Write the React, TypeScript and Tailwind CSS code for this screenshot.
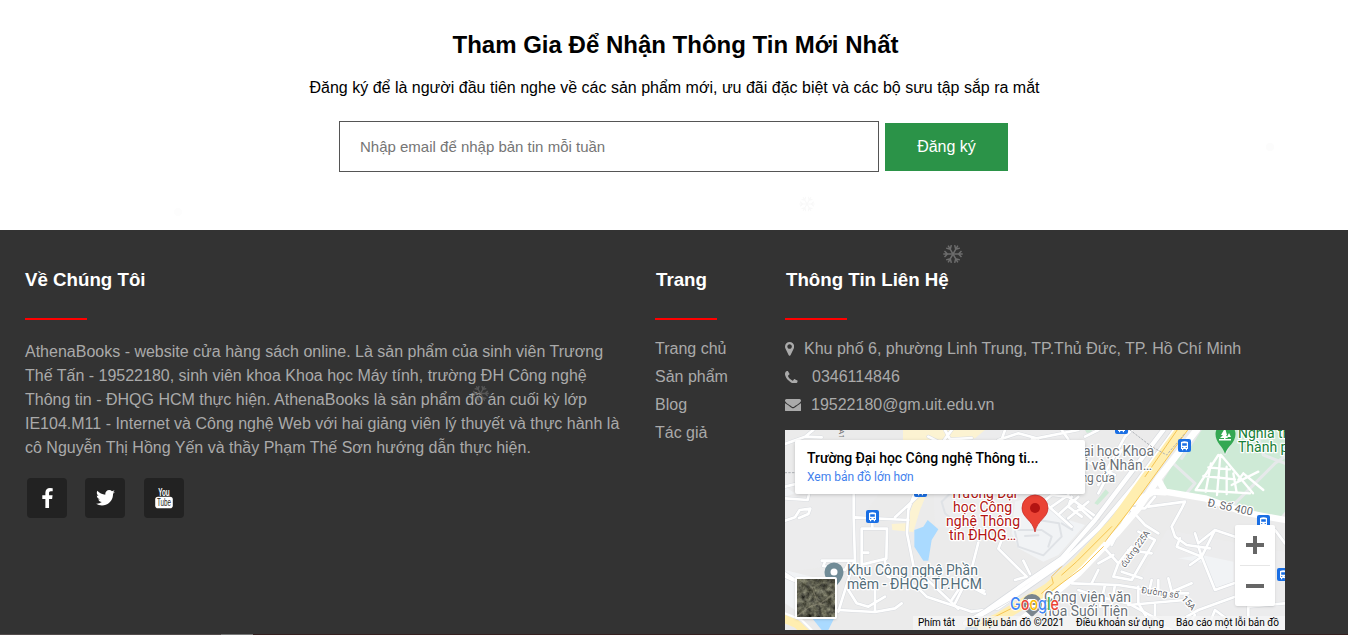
import React from 'react';

const blocks = [
  'M0 120H396L348 102 252 234 206 400 0 426Z',
  'M438 0H900L852 60 630 330 450 288Z',
  'M1146 300L1500 366V600H1170L1050 470Z',
];

const campus = [
  'M496 190L470 215 480 250 520 285 650 315',
  'M690 305L700 350 775 376 810 340 830 320 822 280 760 270M700 300L770 300 800 320 790 350M830 280L862 300 845 265M720 318L760 316',
];

const streets = [
  'M0 42L60 20 110 22M60 20L85 0M0 170L40 160M0 205L68 210 72 192M0 272L30 262 44 240 76 236 70 252 42 264',
  'M206 190V262L210 400M210 262L370 270M262 262V292M230 296H306L304 386 230 404V296M232 368H250M330 262L408 190M388 192L370 240 366 310 388 420 430 452 520 536',
  'M110 392L205 392M120 395L115 408 180 420 190 400M205 400L160 545M300 392L308 440 345 452 395 470 425 500 520 532 560 545 640 535 720 480 800 420 830 395',
  'M270 480V546M190 480L215 520 250 530 300 500M160 540L270 546 330 535 350 520M0 430L60 470M0 440L28 452',
  'M580 338L562 408 540 460 600 492M540 460L510 520M650 330L640 356 725 440 690 450M715 392L735 432M560 472L598 482M520 480L500 510',
  'M430 20L470 40 500 0M480 0L495 28 560 24M660 0L650 28M740 28L880 0M640 30L700 10 760 26M830 0L850 28M900 20L940 0',
  'M775 215L800 195 850 200 940 265M800 230L850 195M825 250L880 200M850 265L910 215M775 215L860 290M880 230L930 275M860 200L850 230 890 260',
  'M940 165L1020 20 1040 0M905 95L990 135M1010 60L940 190',
  'M1110 200L1080 235 1035 235 1080 285 1120 310M1030 245L980 345M1090 230L1200 215 1190 235 1160 290 1170 320 1205 345 1275 355M1085 190L1110 170',
  'M950 345L1000 400 985 440 1040 450 1110 330 1060 305M985 375L940 400M1010 425L1070 445M1030 360L1100 370M1000 400L1040 350',
  'M1185 325L1175 350 1250 380 1290 300M1250 380L1290 480 1360 455M1215 405L1250 380 1240 350M1230 310L1240 340 1290 300 1350 320',
  'M860 460L1000 465 1160 490 1210 490M880 480L940 500 1030 520 1140 580M920 460L940 420M960 465L945 530M990 465L980 520M1100 450L1090 495M1120 450V490M1150 445L1160 485 1220 460M1060 470V520',
  'M1030 525L1200 510M1060 520L1090 570 1160 600M1110 525V600M1170 580L1240 540 1350 500M1200 600L1230 555M1270 590L1290 540 1330 570M1390 600V530L1500 520M1470 300L1500 340',
];

const parkPaths = [
  'M1300 75L1232 180M1306 75L1296 195M1308 75L1404 190M1270 112L1335 118M1255 138L1350 148M1278 100L1262 185M1325 110V192M1345 130L1355 188M1232 180L1395 190',
  'M1340 165L1420 125M1375 130L1435 180M1375 130L1360 150',
];

function Bus({ x, y }: { x: number; y: number }) {
  return (
    <g transform={`translate(${x} ${y})`}>
      <rect width="13" height="13" rx="2" fill="#1a6fe4" />
      <path d="M3 3Q6.5 1.5 10 3V10H9V11.2H7.8V10H5.2V11.2H4V10H3Z" fill="#fff" />
      <path d="M4.2 4.2H8.8V6.8H4.2ZM4.2 8H5.3V9H4.2ZM7.7 8H8.8V9H7.7Z" fill="#1a6fe4" />
    </g>
  );
}

function MapDrawing() {
  return (
    <svg width="500" height="200" viewBox="0 0 500 200" className="block" fontFamily="Roboto, sans-serif">
      <rect width="500" height="200" fill="#ebebeb" />
      <g transform="scale(.33333)" strokeLinejoin="round" strokeLinecap="round">
        {blocks.map((d) => (
          <path key={d} d={d} fill="#ececed" />
        ))}
        <path d="M690 215L760 195 850 270 900 285 820 375 775 395 700 355 680 310ZM1180 385L1250 375 1345 395V455L1290 475 1260 400ZM0 420L80 440 120 540 60 560 0 520ZM0 170L30 190 0 200Z" fill="#f1f3f5" />
        <path d="M1230 0H1500V245L1480 268 1350 222 1140 192 1135 150Z" fill="#ceead6" />
        <path d="M928 220L962 178 972 188 938 225ZM900 0H920V8H905Z" fill="#ceead6" />
        <path d="M428 270L460 298 440 330 430 392 415 392 388 350V300L415 290ZM78 560L160 540 130 600H110Z" fill="#aadaff" />
        <path d="M354 0H600L570 25 440 30 425 192 405 240 385 306 322 300 320 282 362 280 395 192 400 30 354 30Z" fill="#fcf3d2" />
        <g fill="none" stroke="#dfe2e6" strokeWidth="6">
          {campus.map((d) => (
            <path key={d} d={d} />
          ))}
        </g>
        <g fill="none" stroke="#d9dce0" strokeWidth="11">
          {streets.map((d) => (
            <path key={d} d={d} />
          ))}
        </g>
        <g fill="none" stroke="#fff" strokeWidth="8">
          {streets.map((d) => (
            <path key={d} d={d} />
          ))}
        </g>
        <path d="M1190 55L1165 100 1230 160 1200 195M1245 0L1190 85M1420 20L1435 75 1500 100M1380 190L1470 100 1500 80M1320 70L1345 20M1340 230L1400 170" fill="none" stroke="#e6e9ea" strokeWidth="9" />
        <g fill="none" stroke="#fff" strokeWidth="7">
          {parkPaths.map((d) => (
            <path key={d} d={d} />
          ))}
        </g>
        <path d="M1135 0L1040 125 930 270 830 385 720 460 600 545 540 580M1170 0L1050 165 940 295 830 400 700 490 560 570" fill="none" stroke="#d8dbdf" strokeWidth="17" />
        <path d="M1135 0L1040 125 930 270 830 385 720 460 600 545 540 580M1170 0L1050 165 940 295 830 400 700 490 560 570" fill="none" stroke="#fff" strokeWidth="13" />
        <path d="M1235 0L1120 145 1060 235 1000 305 880 430 760 530 670 600" fill="none" stroke="#fff" strokeWidth="20" />
        <path d="M1120 150L1140 185 1260 205 1380 248 1500 270M1050 215L1105 185 1140 187" fill="none" stroke="#fff" strokeWidth="19" />
        <path d="M1195 -10L1130 80 990 275 880 395 790 475 640 565 530 615" fill="none" stroke="#ffeeb0" strokeWidth="32" />
        <path d="M1180 -5L1080 140M1208 0L1030 245 960 335M980 290L875 395 830 435M955 350L890 415 790 490M830 410L800 440 805 460 770 490M720 515L570 590" fill="none" stroke="#f5c451" strokeWidth="3" />
        <path d="M-5 565L35 582 65 610" fill="none" stroke="#ffeeb0" strokeWidth="24" />
        <path d="M-5 548L50 570 80 600" fill="none" stroke="#fff" strokeWidth="6" />
        <path d="M1035 0L1100 50 1145 75 1200 10M0 128H30" fill="none" stroke="#adb1b6" strokeWidth="3" strokeDasharray="5 6" />
      </g>

      <Bus x={81} y={80} />
      <Bus x={129} y={54} />
      <Bus x={330} y={-9} />
      <Bus x={393} y={9} />
      <Bus x={472} y={85} />
      <Bus x={492} y={138} />
      <g opacity=".6"><Bus x={180} y={197} /></g>

      <path d="M440 24C438 16 430.5 13 430.5 4A10 10 0 1 1 450.5 4C450.5 13 442.5 16 440 24Z" fill="#34a853" />
      <path d="M440 -2L436 5H438L435 8H439V9H434V10.500H446V9H440.500V8H443L441 5H442ZM444 3L442 7H446Z" fill="#fff" />
      <path d="M49 161C47 154 39.500 150 39.500 142A9.500 9.500 0 1 1 58.500 142C58.500 150 51 154 49 161Z" fill="#718c97" />
      <circle cx="49" cy="142" r="3.500" fill="#fff" />
      <path d="M247 188C245 183 237 181 237 174A10 10 0 1 1 257 174C257 181 249 183 247 188Z" fill="#7b858d" />
      <path d="M243 169H250V173H243ZM241 175H252V177H241Z" fill="#fff" />

      <g stroke="#fff" strokeWidth="2.5" strokeLinejoin="round" style={{ paintOrder: 'stroke' }}>
        <g fill="#b31412" fontSize="14">
          <text x="165" y="68" textLength="67">Trường Đại</text>
          <text x="168" y="82" textLength="59">học Công</text>
          <text x="161" y="96" textLength="74">nghệ Thông</text>
          <text x="164" y="110" textLength="67">tin ĐHQG…</text>
        </g>
        <g fill="#546e7a" fontSize="14">
          <text x="62" y="145" textLength="131">Khu Công nghệ Phần</text>
          <text x="62" y="159" textLength="135">mềm - ĐHQG TP.HCM</text>
        </g>
        <g fill="#6c7278" fontSize="14">
          <text x="298" y="26" textLength="71">ại học Khoa</text>
          <text x="300" y="40" textLength="67">i và Nhân…</text>
          <text x="296" y="52" fontSize="12" textLength="34">ng cửa</text>
          <text x="259" y="172" textLength="87">Công viên văn</text>
          <text x="259" y="186" textLength="84">hóa Suối Tiên</text>
        </g>
        <g fill="#188038" fontSize="14">
          <text x="453" y="8">Nghĩa tr</text>
          <text x="453" y="22">Thành p</text>
        </g>
        <g fill="#5f6368" fontSize="11">
          <text transform="translate(422 76) rotate(12)" textLength="46">Đ. Số 400</text>
          <text transform="translate(340 138) rotate(-54)" fontSize="9" textLength="43">đường 225A</text>
          <text transform="translate(356 163) rotate(8)" fontSize="9" textLength="38">Đường số</text>
          <text transform="translate(396 169) rotate(48)" fontSize="9">15A</text>
        </g>
      </g>
      <text transform="translate(54 -1) rotate(90)" fontSize="8" fill="#777">A1</text>

      <path d="M250 102C248 90 237 88 237 78A13 13 0 0 1 263 78C263 88 252 90 250 102Z" fill="#ea4335" stroke="#c5221f" strokeWidth=".7" />
      <circle cx="250" cy="78" r="5" fill="#b31412" />
      <g fontFamily="Inter, sans-serif" fontSize="17" fontWeight="500" stroke="#fff" strokeWidth="1.500" style={{ paintOrder: 'stroke' }}>
        <text x="225" y="180" textLength="49" lengthAdjust="spacingAndGlyphs">
          <tspan fill="#4285f4">G</tspan>
          <tspan fill="#ea4335">o</tspan>
          <tspan fill="#fbbc04">o</tspan>
          <tspan fill="#4285f4">g</tspan>
          <tspan fill="#34a853">l</tspan>
          <tspan fill="#ea4335">e</tspan>
        </text>
      </g>
      <rect x="128" y="186" width="372" height="14" fill="#f5f5f5" fillOpacity=".75" />
      <g fill="#000" fontSize="10">
        <text x="133" y="196" textLength="37">Phím tắt</text>
        <text x="182" y="196" textLength="97">Dữ liệu bản đồ ©2021</text>
        <text x="291" y="196" textLength="88">Điều khoản sử dụng</text>
        <text x="391" y="196" textLength="103">Báo cáo một lỗi bản đồ</text>
      </g>
    </svg>
  );
}

function SatelliteThumb() {
  return (
    <svg width="38" height="38" viewBox="0 0 38 38" className="block">
      <defs>
        <filter id="terrain" x="0" y="0" width="100%" height="100%" colorInterpolationFilters="sRGB">
          <feTurbulence type="fractalNoise" baseFrequency=".2" numOctaves="4" seed="8" />
          <feColorMatrix values=".5 .3 0 0 -.03  .5 .3 0 0 -.03  .4 .3 0 0 -.04  0 0 0 0 1" />
        </filter>
      </defs>
      <rect width="38" height="38" filter="url(#terrain)" />
      <path d="M0 37L14 27 24 24 38 14M15 8L20 22 26 26" fill="none" stroke="#a19b87" strokeWidth="1.200" opacity=".4" />
    </svg>
  );
}

const glyphs = {
  facebook: 'M1343 12v264h-157q-86 0-116 36t-30 108v189h293l-39 296h-254v759h-306v-759h-255v-296h255v-218q0-186 104-288.5t277-102.5q147 0 228 12z',
  twitter: 'M1684 408q-67 98-162 167 1 14 1 42 0 130-38 259.5t-115.5 248.5-184.5 210.5-258 146-323 54.5q-271 0-496-145 35 4 78 4 225 0 401-138-105-2-188-64.5t-114-159.5q33 5 61 5 43 0 85-11-112-23-185.5-111.5t-73.5-205.5v-4q68 38 146 41-66-44-105-115t-39-154q0-88 44-163 121 149 294.5 238.5t371.5 99.5q-8-38-8-74 0-134 94.5-228.5t228.5-94.5q140 0 236 102 109-21 205-78-37 115-142 178 93-10 186-50z',
  marker: 'M768 896q0 106-75 181t-181 75-181-75-75-181 75-181 181-75 181 75 75 181zm256 0q0 109-33 179l-364 774q-16 33-47.5 52t-67.5 19-67.5-19-46.500-52l-365-774q-33-70-33-179 0-212 150-362t362-150 362 150 150 362z',
  phone: 'M1600 1240q0 27-10 70.5t-21 68.5q-21 50-122 106-94 51-186 51-27 0-52.5-3.5t-57.5-12.5-47.5-14.5-55.5-20.5-49-18q-98-35-175-83-128-79-264.5-215.5t-215.5-264.5q-48-77-83-175-3-9-18-49t-20.5-55.5-14.5-47.5-12.5-57.5-3.5-52.5q0-92 51-186 56-101 106-122 25-11 68.5-21t70.5-10q14 0 21 3 18 6 53 76 11 19 30 54t35 63.5 31 53.5q3 4 17.5 25t21.5 35.5 7 28.5q0 20-28.5 50t-62 55-62 53-28.5 46q0 9 5 22.5t8.5 20.5 14 24 11.5 19q76 137 174 235t235 174q2 1 19 11.5t24 14 20.5 8.5 22.5 5q18 0 46-28.5t53-62 55-62 50-28.5q14 0 28.5 7t35.5 21.5 25 17.5q25 15 53.5 31t63.5 35 54 30q70 35 76 53 3 7 3 21z',
  envelope: 'M1792 710v794q0 66-47 113t-113 47h-1472q-66 0-113-47t-47-113v-794q44 49 101 87 362 246 497 345 57 42 92.5 65.5t94.5 48 110 24.5h2q51 0 110-24.5t94.5-48 92.5-65.5q170-123 498-345 57-39 100-87zm0-294q0 79-49 151t-122 123q-376 261-468 325-10 7-42.5 31t-54 38.8-52 33.2-57.5 27.5-50 9h-2q-23 0-50-9t-57.5-27.5-52-33.2-54-38.8-42.5-31q-91-64-262-182.5t-205-142.5q-62-42-117-115.5t-55-136.5q0-78 41.5-130t118.5-52h1472q65 0 112.500 47t47.500 113z',
};

function Glyph({ d, box, width, height, className = '' }: { d: string; box: string; width: number; height: number; className?: string }) {
  return (
    <svg viewBox={box} width={width} height={height} fill="currentColor" className={`shrink-0 ${className}`}>
      <path d={d} fillRule="evenodd" />
    </svg>
  );
}

function Snowflake({ size, className }: { size: number; className: string }) {
  return (
    <svg width={size} height={size} viewBox="-10 -10 20 20" fill="none" stroke="currentColor" strokeWidth="1.5" className={className}>
      {[0, 60, 120, 180, 240, 300].map((a) => (
        <path key={a} d="M0 0H9.7M5.5 0L8.500 -3M5.5 0L8.500 3" transform={`rotate(${a})`} />
      ))}
    </svg>
  );
}

function ColumnTitle({ children, className = '' }: { children: React.ReactNode; className?: string }) {
  return (
    <>
      <h3 className={`h-6 whitespace-nowrap text-[18.72px] font-bold leading-[25px] text-white ${className}`}>{children}</h3>
      <div className="mt-[27px] h-[2px] w-[62px] bg-[#f00]" />
    </>
  );
}

const social = 'flex h-10 w-10 items-center justify-center rounded-[4px] bg-[#222] text-white';

export default function App() {
  return (
    <div className="relative flex h-[635px] w-[1348px] flex-col overflow-hidden bg-white font-['Liberation_Sans',Arial,sans-serif] text-base">
      <section className="flex h-[230px] flex-col items-center pt-[30px] text-black">
        <h2 className="h-[30px] whitespace-nowrap pl-[3px] text-2xl font-bold leading-[30px]">Tham Gia Để Nhận Thông Tin Mới Nhất</h2>
        <p className="mt-4 h-6 whitespace-nowrap pl-px leading-6">
          Đăng ký để là người đầu tiên nghe về các sản phẩm mới, ưu đãi đặc biệt và các bộ sưu tập sắp ra mắt
        </p>
        <form className="mt-[21px] flex gap-[6px] pr-px">
          <input
            className="h-[51px] w-[540px] border border-[#555] px-5 text-[15px] placeholder:text-[#757575]"
            placeholder="Nhập email để nhập bản tin mỗi tuần"
          />
          <button type="button" className="mt-[2px] h-12 w-[123px] bg-[#2b9348] text-white">Đăng ký</button>
        </form>
      </section>

      <footer className="grid h-[404px] grid-cols-[630px_130px_500px] bg-[#333] pl-[25px] pt-[37px] text-[#aaa]">
        <section>
          <ColumnTitle>Về Chúng Tôi</ColumnTitle>
          <p className="mt-5 whitespace-nowrap leading-6">
            AthenaBooks - website cửa hàng sách online. Là sản phẩm của sinh viên Trương<br />
            Thế Tấn - 19522180, sinh viên khoa Khoa học Máy tính, trường ĐH Công nghệ<br />
            Thông tin - ĐHQG HCM thực hiện. AthenaBooks là sản phẩm đồ án cuối kỳ lớp<br />
            IE104.M11 - Internet và Công nghệ Web với hai giảng viên lý thuyết và thực hành là<br />
            cô Nguyễn Thị Hồng Yến và thầy Phạm Thế Sơn hướng dẫn thực hiện.
          </p>
          <div className="ml-[2px] mt-[18px] flex">
            <div className={social}><Glyph d={glyphs.facebook} box="479 0 864 1664" width={11} height={20} className="ml-px" /></div>
            <div className={`${social} ml-[18px]`}><Glyph d={glyphs.twitter} box="108 256 1576 1280" width={19} height={15.4} className="ml-px" /></div>
            <div className={`${social} ml-[19px]`}>
              <svg width="20" height="24" viewBox="0 0 20 24" className="overflow-visible" fontFamily="Liberation Sans, sans-serif" fontWeight="bold">
                <text x="4.2" y="10" fontSize="11.5" fill="#fff" textLength="11.5" lengthAdjust="spacingAndGlyphs">You</text>
                <rect x="1.2" y="10.7" width="17.6" height="11.5" rx="2.8" fill="#fff" />
                <text x="3" y="20.4" fontSize="11" fontWeight="400" fill="#222" textLength="14" lengthAdjust="spacingAndGlyphs">Tube</text>
              </svg>
            </div>
          </div>
        </section>

        <section>
          <ColumnTitle className="pl-px">Trang</ColumnTitle>
          <ul className="mt-[15px] leading-7">
            <li>Trang chủ</li>
            <li>Sản phẩm</li>
            <li>Blog</li>
            <li>Tác giả</li>
          </ul>
        </section>

        <section>
          <ColumnTitle className="pl-px">Thông Tin Liên Hệ</ColumnTitle>
          <ul className="mt-[15px] whitespace-nowrap leading-7">
            <li className="flex items-center"><Glyph d={glyphs.marker} box="0 384 1024 1536" width={9.2} height={13.7} className="mr-[9.8px]" />Khu phố 6, phường Linh Trung, TP.Thủ Đức, TP. Hồ Chí Minh</li>
            <li className="flex items-center"><Glyph d={glyphs.phone} box="192 128 1408 1408" width={12.6} height={12.6} className="mr-[14.4px]" />0346114846</li>
            <li className="flex items-center"><Glyph d={glyphs.envelope} box="0 256 1792 1408" width={16} height={12.6} className="mr-[10px]" />19522180@gm.uit.edu.vn</li>
          </ul>
          <div className="relative mt-[11px] h-[200px] w-[500px] overflow-hidden">
            <MapDrawing />
            <div className="absolute left-[10px] top-[10px] h-[54px] w-[290px] rounded-[2px] bg-white px-3 pt-[9px] font-[Roboto,sans-serif] shadow-[0_1px_4px_-1px_rgba(0,0,0,0.3)]">
              <div className="whitespace-nowrap text-[14px] font-medium leading-[18px] tracking-[-0.05px] text-black">Trường Đại học Công nghệ Thông ti...</div>
              <div className="mt-px text-[12px] leading-[18px] text-[#427fed]">Xem bản đồ lớn hơn</div>
            </div>
            <div className="absolute left-[10px] top-[147px] rounded-[2px] border-2 border-white shadow"><SatelliteThumb /></div>
            <div className="absolute left-[450px] top-[95px] flex h-[81px] w-10 flex-col items-center rounded-[2px] bg-white shadow">
              <svg width="40" height="81" viewBox="0 0 40 81">
                <path d="M11 18H18V11H22V18H29V22H22V29H18V22H11ZM11 59H29V63H11Z" fill="#666" />
                <path d="M5 40.5H35" stroke="#e6e6e6" />
              </svg>
            </div>
          </div>
        </section>
      </footer>
      <div className="flex h-px bg-[#342020]"><div className="w-[221px] bg-[#514a4a]" /><div className="w-8 bg-[#777]" /></div>

      <Snowflake size={20} className="absolute left-[943px] top-[244px] text-[#6c6c6c]" />
      <Snowflake size={17} className="absolute left-[472px] top-[385px] text-[#707070] opacity-60" />
      <Snowflake size={16} className="absolute left-[799px] top-[196px] text-[#f9f9f9]" />
      <div className="absolute left-[174px] top-[208px] h-2 w-2 rounded-full bg-[#fdfdfd]" />
      <div className="absolute left-[1266px] top-[143px] h-2 w-2 rounded-full bg-[#fcfcfc]" />
    </div>
  );
}
